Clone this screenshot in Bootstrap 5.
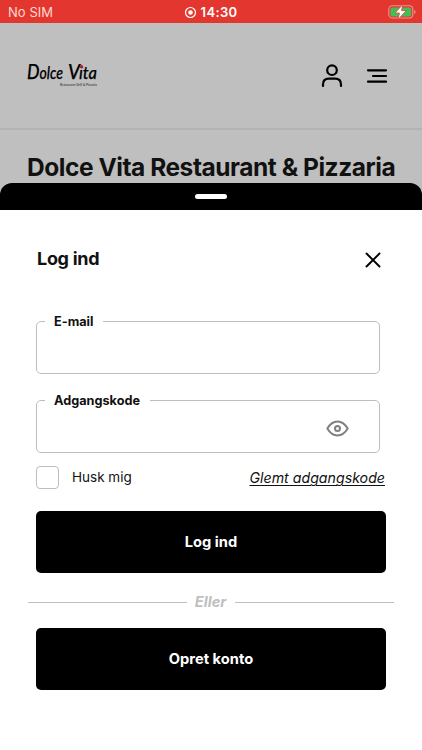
<!DOCTYPE html>
<html lang="da">
<head>
<meta charset="utf-8">
<meta name="viewport" content="width=device-width, initial-scale=1">
<title>Dolce Vita – Log ind</title>
<link href="https://cdn.jsdelivr.net/npm/bootstrap@5.3.0/dist/css/bootstrap.min.css" rel="stylesheet">
<style>
body{font-family:Inter,"Liberation Sans",sans-serif;color:#111;height:750px;overflow:hidden}
svg{display:block;flex:none}
.status-bar{height:23px;background:#e3362e;color:#fff;display:grid;grid-template-columns:1fr auto 1fr;padding:0 6px 0 8px;font-size:13px}
.sim{color:#ffd9d4;letter-spacing:.05px;line-height:24px}
.clock{font-weight:600;font-size:13px;letter-spacing:.35px;line-height:24px}
.status-mid{margin-left:-3px}
.dimmed{background:#bfbfbf;height:160px}
.site-header{height:107px;border-bottom:2px solid #b3b3b3;padding:1px 34px 0 26px}
.menu-icon{margin-left:23px}
.shop-title{font-size:24.5px;font-weight:700;letter-spacing:-.46px;line-height:30px;padding:22px 0 0 27px;white-space:nowrap;margin:0}
.backdrop-fill{background:#bfbfbf}
.grip-bar{height:27px;background:#000;border-radius:12px 12px 0 0}
.grip{width:32px;height:5px;border-radius:3px;background:#fff}
.panel{background:#fff;height:540px;padding:0 36px}
.sheet-head{padding:38px 5px 0 0;height:99px}
.sheet-title{font-size:18px;line-height:22px;font-weight:700;letter-spacing:-.3px;margin:0 0 0 1px}
.field{border:1px solid #bdbdbd;border-radius:5px;width:344px;height:65px;padding:0;min-width:0}
.field + .field{margin-top:14px}
.field legend{float:none;width:auto;margin:0 0 0 8px;padding:1px 9.5px 0 9px;font-size:12.7px;font-weight:700;line-height:23px;height:24px}
.field input{border:0;background:none;outline:0;height:40px;min-width:0}
.eye{margin:-8px 30px 0 0}
.tick{width:23px;height:23px;border:1px solid #bdbdbd;border-radius:4px;margin:0;appearance:none;background:#fff}
.options{height:23px;margin-top:13px;font-size:13.5px;padding-right:1px}
.options label{margin:-1px 0 0 13px}
.forgot{font-style:italic;color:#111;text-underline-offset:2px;text-decoration-thickness:1px;font-size:14.2px;padding-top:1px}
.action{height:62px;border-radius:5px;background:#000;color:#fff;font-size:14.7px;font-weight:700;border:0;padding:7px 12px 6px}
.login{margin-top:22px}
.or-line{margin:0 -8px;height:55px;padding-top:3px;color:#bfbfbf;font-style:italic;font-weight:700;font-size:14.7px}
.or-line span{margin:1px 9px 0 8px}
.rule{height:1px;background:#bfbfbf}
</style>
<script src="https://cdn.jsdelivr.net/npm/bootstrap@5.3.0/dist/js/bootstrap.bundle.min.js"></script>
</head>
<body>
<div class="status-bar align-items-center">
  <span class="sim">No SIM</span>
  <span class="status-mid d-flex align-items-center">
    <svg class="me-1" width="13" height="13" viewBox="0 0 13 13"><circle cx="6.5" cy="6.5" r="5" fill="none" stroke="#fff" stroke-width="1.2"/><circle cx="6.5" cy="6.5" r="2.3" fill="#fff"/></svg>
    <span class="clock">14:30</span>
  </span>
  <svg class="ms-auto" width="28" height="16" viewBox="0 0 28 16"><rect x=".8" y="1.8" width="24" height="12.2" rx="3.5" fill="none" stroke="#f0928c" stroke-width="1.1"/><rect x="2.4" y="3.4" width="20.8" height="9" rx="2" fill="#45bd57"/><path d="M26.2 6v4q1.4-.6 1.4-2t-1.4-2z" fill="#f0928c"/><path d="M14.7 .6 7 9h4.5L10 15.6l8.2-9.1h-4.7z" fill="#fff" stroke="#e3362e" stroke-width=".7"/></svg>
</div>
<div class="dimmed">
  <header class="site-header d-flex align-items-center">
    <svg class="me-auto" width="80" height="34" viewBox="0 0 80 34" font-family="Lato, sans-serif">
      <text y="20" font-style="italic" font-weight="500" font-size="18" fill="#000" stroke="#000" stroke-width=".25"><tspan x="1" font-size="21" textLength="12.5" lengthAdjust="spacingAndGlyphs">D</tspan><tspan x="13.5" textLength="23.5" lengthAdjust="spacingAndGlyphs">olce</tspan> <tspan x="42" font-size="21" textLength="12" lengthAdjust="spacingAndGlyphs">V</tspan><tspan x="53" textLength="18" lengthAdjust="spacingAndGlyphs">ita</tspan></text>
      <circle cx="55.6" cy="7.6" r="1.5" fill="#c31432"/>
      <text x="34" y="26.8" font-size="4.2" fill="#222" textLength="37" lengthAdjust="spacingAndGlyphs">Restaurant Grill &amp; Pizzaria</text>
    </svg>
    <svg width="22" height="24" viewBox="0 0 22 24" fill="none" stroke="#000" stroke-width="2.2" stroke-linecap="round"><circle cx="11" cy="6.2" r="4.8"/><path d="M2 22v-1.5q0-5.8 5.8-5.8h6.4q5.8 0 5.8 5.8V22"/></svg>
    <svg class="menu-icon" width="22" height="16" viewBox="0 0 22 16" stroke="#000" stroke-width="2.2" stroke-linecap="round"><path d="M2 2.3h18M7 8h13M2 13.7h18"/></svg>
  </header>
  <h1 class="shop-title">Dolce Vita Restaurant &amp; Pizzaria</h1>
</div>
<div class="backdrop-fill"><main>
  <div class="grip-bar d-flex align-items-center justify-content-center"><div class="grip"></div></div>
  <div class="panel">
    <div class="sheet-head d-flex justify-content-between align-items-start">
      <h2 class="sheet-title">Log ind</h2>
      <svg class="mt-1" width="16" height="16" viewBox="0 0 16 16" stroke="#000" stroke-width="1.9" stroke-linecap="round"><path d="m1.5 1.5 13 13m0-13-13 13"/></svg>
    </div>
    <form>
      <fieldset class="field">
        <legend>E-mail</legend>
        <input class="w-100" type="email" aria-label="E-mail">
      </fieldset>
      <fieldset class="field">
        <legend>Adgangskode</legend>
        <div class="d-flex align-items-center">
          <input class="flex-grow-1" type="password" aria-label="Adgangskode">
          <svg class="eye" width="23" height="17" viewBox="0 0 23 17" fill="none" stroke="#808080" stroke-width="2"><path d="M1.3 8.5Q5.5 1.5 11.5 1.5t10.2 7q-4.2 7-10.2 7t-10.2-7z" stroke-linejoin="round"/><circle cx="11.5" cy="8.5" r="2.5"/></svg>
        </div>
      </fieldset>
      <div class="options d-flex align-items-center">
        <input class="tick" type="checkbox" id="husk"><label for="husk">Husk mig</label>
        <a class="forgot ms-auto" href="#">Glemt adgangskode</a>
      </div>
      <button class="action login btn w-100" type="button">Log ind</button>
      <div class="or-line d-flex align-items-center">
        <div class="rule flex-fill"></div><span>Eller</span><div class="rule flex-fill"></div>
      </div>
      <button class="action btn w-100" type="button">Opret konto</button>
    </form>
  </div>
</main></div>
</body>
</html>
